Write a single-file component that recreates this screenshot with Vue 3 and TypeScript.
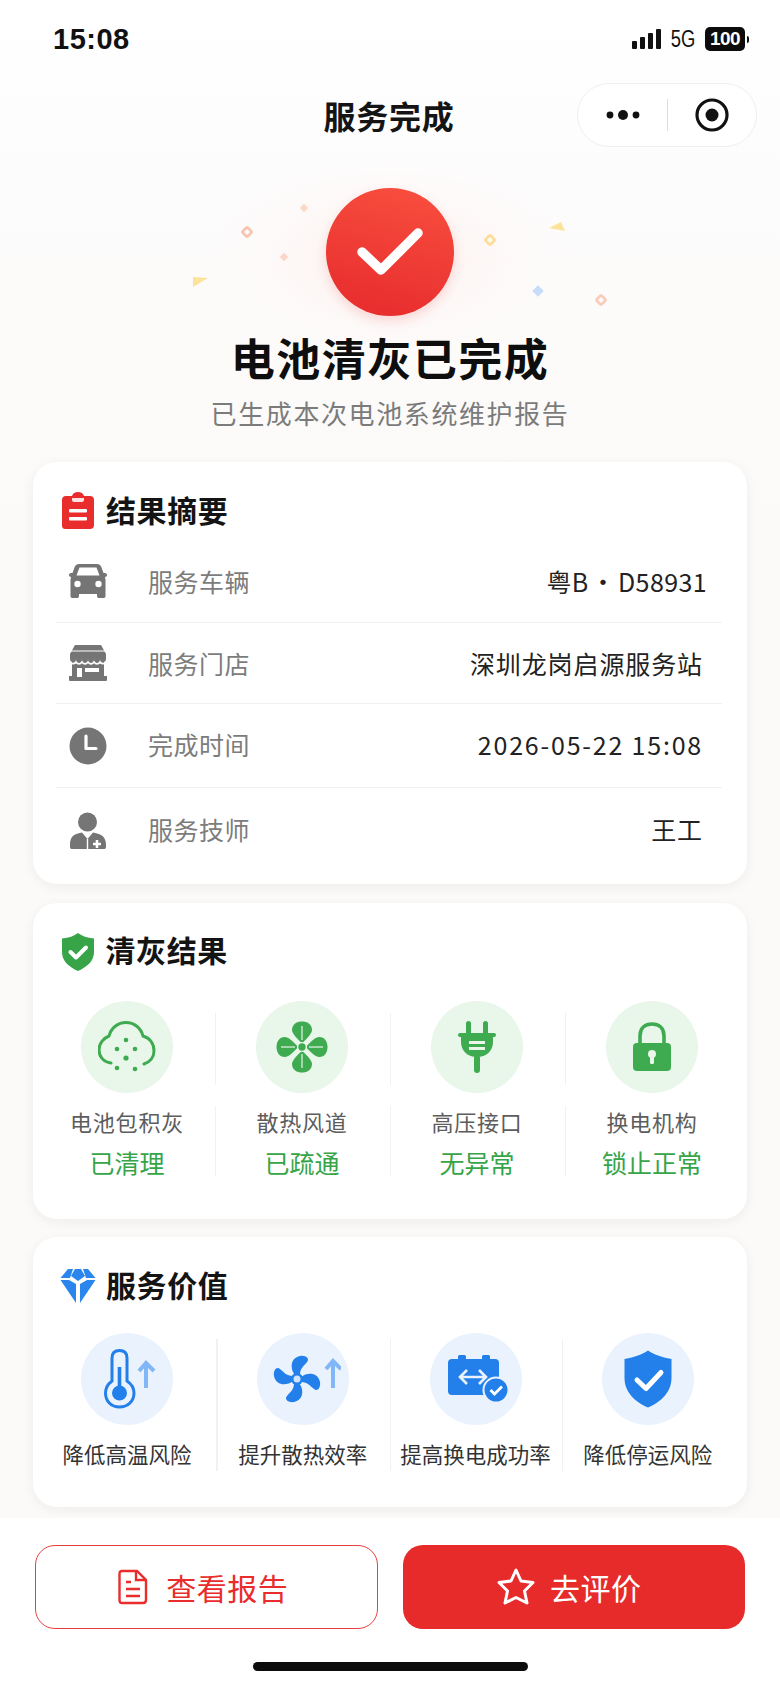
<script setup lang="ts">
const checks = [
  { label: '电池包积灰', state: '已清理' },
  { label: '散热风道', state: '已疏通' },
  { label: '高压接口', state: '无异常' },
  { label: '换电机构', state: '锁止正常' },
]
const values = ['降低高温风险', '提升散热效率', '提高换电成功率', '降低停运风险']
const rows = [
  { label: '服务车辆', value: '粤B · D58931', kind: 'plate' },
  { label: '服务门店', value: '深圳龙岗启源服务站', kind: '' },
  { label: '完成时间', value: '2026-05-22 15:08', kind: 'date' },
  { label: '服务技师', value: '王工', kind: '' },
]
</script>

<template>
  <div class="page">
    <header class="status">
      <span class="time">15:08</span>
      <div class="status-right">
        <svg width="30" height="22" viewBox="0 0 30 22"><g fill="#111"><rect x="0" y="13" width="5" height="8" rx="1"/><rect x="8" y="9" width="5" height="12" rx="1"/><rect x="16" y="5" width="5" height="16" rx="1"/><rect x="24" y="1" width="5" height="20" rx="1"/></g></svg>
        <span class="net">5G</span>
        <span class="batt">100</span>
        <span class="batt-tip"></span>
      </div>
    </header>

    <nav class="nav">
      <span></span>
      <h1 class="nav-title">服务完成</h1>
      <div class="capsule-wrap">
        <div class="capsule">
          <svg width="36" height="14" viewBox="0 0 36 14"><g fill="#111"><circle cx="5" cy="7" r="3.4"/><circle cx="18" cy="7" r="5"/><circle cx="31" cy="7" r="3.4"/></g></svg>
          <i class="capsule-sep"></i>
          <svg class="capsule-target" width="36" height="36" viewBox="0 0 36 36"><circle cx="18" cy="18" r="15" fill="none" stroke="#111" stroke-width="3.2"/><circle cx="18" cy="18" r="6.500" fill="#111"/></svg>
        </div>
      </div>
    </nav>

    <section class="hero">
      <div class="halo"></div>
      <svg class="confetti" width="440" height="160" viewBox="0 0 440 160">
        <rect x="-3.500" y="-3.500" width="7" height="7" rx="1" transform="translate(77 62) rotate(45)" fill="none" stroke="#fbc2ae" stroke-width="2.600"/>
        <rect x="-3" y="-3" width="6" height="6" transform="translate(134 38) rotate(45)" fill="#fbd8c6"/>
        <rect x="-3" y="-3" width="6" height="6" transform="translate(114 87) rotate(45)" fill="#fbd5c6"/>
        <path d="M23 107 L38 108 L23 117 Z" fill="#fbe39a"/>
        <rect x="-3.500" y="-3.500" width="7" height="7" rx="1" transform="translate(320 70) rotate(45)" fill="none" stroke="#fbdd98" stroke-width="2.600"/>
        <path d="M379 58 L391 52 L395 61 Z" fill="#fbe39a"/>
        <rect x="-4" y="-4" width="8" height="8" transform="translate(368 121) rotate(45)" fill="#c6dcfb"/>
        <rect x="-3.500" y="-3.500" width="7" height="7" rx="1" transform="translate(431 130) rotate(45)" fill="none" stroke="#fbcbbb" stroke-width="2.600"/>
      </svg>
      <div class="badge">
        <svg width="68" height="54" viewBox="0 0 68 54"><path d="M6 27 L25 45 L62 8" fill="none" stroke="#fff" stroke-width="9.500" stroke-linecap="round" stroke-linejoin="round"/></svg>
      </div>
      <h2 class="hero-title">电池清灰已完成</h2>
      <p class="hero-sub">已生成本次电池系统维护报告</p>
    </section>

    <main class="cards">
      <section class="card card-summary">
        <h3 class="card-title">
          <svg class="title-icon" width="34" height="38" viewBox="0 0 34 38">
            <path d="M5 4 H11 C12 1 14 0 17 0 C20 0 22 1 23 4 H29 C32 4 33 6 33 8 V33 C33 36 31 37 29 37 H5 C2 37 1 36 1 33 V8 C1 6 2 4 5 4 Z" fill="#e92c2c"/>
            <path d="M11 6 H23 V8 C23 9 22 10 21 10 H13 C12 10 11 9 11 8 Z" fill="#fbe3e3"/>
            <rect x="8" y="17" width="18" height="3.400" rx="1" fill="#fff"/><rect x="8" y="25" width="18" height="3.400" rx="1" fill="#fff"/>
          </svg>
          结果摘要
        </h3>
        <div class="rows">
          <div v-for="(row, i) in rows" :key="row.label" class="row">
            <span class="row-icon">
              <svg v-if="i === 0" width="38" height="36" viewBox="0 0 38 36"><path fill="#757575" d="M10 1 H28 C30 1 31.500 2 32.300 4 L34.500 10 H36 C37.200 10 38 11 38 12 C38 13 37 14 36 14 L36.500 17 V33 C36.500 34.500 35.500 35 34.500 35 H30 C29 35 28 34.500 28 33 V31 H10 V33 C10 34.500 9 35 8 35 H3.500 C2.500 35 1.500 34.500 1.500 33 V17 L2 14 C1 14 0 13 0 12 C0 11 0.800 10 2 10 H3.500 L5.700 4 C6.500 2 8 1 10 1 Z"/><path fill="#fff" d="M10.500 4.500 H27.500 L30.500 12.500 H7.500 Z"/><circle cx="8.500" cy="21" r="3.200" fill="#fff"/><circle cx="29.500" cy="21" r="3.200" fill="#fff"/></svg>
              <svg v-else-if="i === 1" width="38" height="36" viewBox="0 0 38 36"><path fill="#757575" d="M6 0 H32 L37 9 V13 H1 V9 Z"/><path fill="#757575" d="M3 15 H35 V31 H38 V35 C38 35.500 37.500 36 37 36 H1 C0.500 36 0 35.500 0 35 V31 H3 Z"/><path fill="#757575" d="M1 10 H37 V14 A3 3 0 0 1 31 14 A3 3 0 0 1 25 14 A3 3 0 0 1 19 14 A3 3 0 0 1 13 14 A3 3 0 0 1 7 14 A3 3 0 0 1 1 14 Z"/><path d="M1 6 H37" stroke="#fff" stroke-width="1.200"/><path d="M1 18 C4 19 6 19 7 17 C9 19.500 11 19.500 13 17 C15 19.500 17 19.500 19 17 C21 19.500 23 19.500 25 17 C27 19.500 29 19.500 31 17 C32 19 34 19 37 18" stroke="#fff" stroke-width="1.800" fill="none"/><rect x="8" y="23" width="5" height="9" fill="#fff"/><rect x="16" y="23" width="14" height="4" fill="#fff"/></svg>
              <svg v-else-if="i === 2" width="38" height="38" viewBox="0 0 38 38"><circle cx="19" cy="19" r="18.500" fill="#757575"/><path d="M17 9 V21.500 H27" fill="none" stroke="#fff" stroke-width="3.200" stroke-linecap="round" stroke-linejoin="round"/></svg>
              <svg v-else width="38" height="38" viewBox="0 0 38 38"><circle cx="18.500" cy="10" r="9.500" fill="#757575"/><path fill="#757575" d="M1 33 C1 25 4 22 13 20.500 L18.500 27 L24 20.500 C33 22 37 25 37 33 V35 C37 36.500 36 37 35 37 H3 C2 37 1 36.500 1 35 Z"/><path d="M24 32 H32 M28 28 V36" stroke="#fff" stroke-width="2.600"/><path d="M18.500 27 V37" stroke="#fff" stroke-width="1.400"/></svg>
            </span>
            <span class="row-label">{{ row.label }}</span>
            <span class="row-value" :class="row.kind">{{ row.value }}</span>
          </div>
        </div>
      </section>

      <section class="card card-clean">
        <h3 class="card-title">
          <svg class="title-icon shield" width="34" height="38" viewBox="0 0 34 38"><path d="M17 0 C21 3 26 5 33 5.500 V19 C33 28 26 34 17 38 C8 34 1 28 1 19 V5.500 C8 5 13 3 17 0 Z" fill="#36a447"/><path d="M9.500 19 L15 24.500 L25 14.500" fill="none" stroke="#fff" stroke-width="4" stroke-linecap="round" stroke-linejoin="round"/></svg>
          清灰结果
        </h3>
        <div class="grid grid-clean">
          <div v-for="(c, i) in checks" :key="c.label" class="cell">
            <div class="circle green">
              <svg v-if="i === 0" width="58" height="52" viewBox="0 0 58 52"><path d="M13 42 C5 41 1 35 1 29 C1 22 6 17 11 15 C13 7 20 1.500 28 1.500 C36 1.500 43 7 45 15 C52 17 56 23 56 30 C56 36 52 41 46 43" fill="none" stroke="#3fab50" stroke-width="3" stroke-linecap="round"/><g fill="#3fab50"><circle cx="28" cy="19" r="2.300"/><circle cx="19" cy="28" r="2.300"/><circle cx="37" cy="28" r="2.300"/><circle cx="28" cy="37" r="2.600"/><circle cx="19" cy="47" r="2.300"/><circle cx="37" cy="48" r="2.300"/></g></svg>
              <svg v-else-if="i === 1" width="52" height="52" viewBox="0 0 52 52"><g fill="#3fab50"><path d="M26 22 C20 17 16 12 16 9 C16 3 21 0.500 26 0.500 C31 0.500 36 3 36 9 C36 12 32 17 26 22 Z"/><path d="M26 22 C20 17 16 12 16 9 C16 3 21 0.500 26 0.500 C31 0.500 36 3 36 9 C36 12 32 17 26 22 Z" transform="rotate(90 26 26)"/><path d="M26 22 C20 17 16 12 16 9 C16 3 21 0.500 26 0.500 C31 0.500 36 3 36 9 C36 12 32 17 26 22 Z" transform="rotate(180 26 26)"/><path d="M26 22 C20 17 16 12 16 9 C16 3 21 0.500 26 0.500 C31 0.500 36 3 36 9 C36 12 32 17 26 22 Z" transform="rotate(270 26 26)"/></g><g stroke="#e9f6ea" stroke-width="1.200" fill="none"><path d="M26 5 V19"/><path d="M26 33 V47"/><path d="M5 26 H19"/><path d="M33 26 H47"/></g><circle cx="26" cy="26" r="4.400" fill="#3fab50" stroke="#e9f6ea" stroke-width="1.400"/></svg>
              <svg v-else-if="i === 2" width="38" height="52" viewBox="0 0 38 52"><g fill="#3fab50"><rect x="8" y="0" width="5" height="14" rx="2.500"/><rect x="25" y="0" width="5" height="14" rx="2.500"/><rect x="0" y="12" width="38" height="4" rx="2"/><path d="M3 15 H35 V21 C35 30 28 36 19 36 C10 36 3 30 3 21 Z"/><rect x="16" y="34" width="6" height="18" rx="3"/></g><rect x="11" y="20" width="16" height="3" fill="#e9f6ea"/><rect x="11" y="26" width="16" height="3" fill="#e9f6ea"/></svg>
              <svg v-else width="40" height="50" viewBox="0 0 40 50"><path d="M8 22 V14 C8 6 13 2 20 2 C27 2 32 6 32 14 V22" fill="none" stroke="#3fab50" stroke-width="3.600"/><rect x="1" y="21" width="38" height="28" rx="4" fill="#3fab50"/><circle cx="20" cy="32" r="4" fill="#e9f6ea"/><rect x="18" y="33" width="4" height="9" rx="1.500" fill="#e9f6ea"/></svg>
            </div>
            <p class="cell-label">{{ c.label }}</p>
            <p class="cell-state">{{ c.state }}</p>
          </div>
        </div>
      </section>

      <section class="card card-value">
        <h3 class="card-title">
          <svg class="title-icon diamond" width="36" height="36" viewBox="0 0 36 36"><g fill="#2a85ec"><path d="M8 1 H13 L10 10 H0.500 Z"/><path d="M15 1 H21 L25 8 L18 13 L11 8 Z"/><path d="M23 1 H28 L35.500 10 H26 Z"/><path d="M0.500 12 H9 L16 16 V35 Z"/><path d="M27 12 H35.500 L20 35 V16 Z"/></g></svg>
          服务价值
        </h3>
        <div class="grid grid-value">
          <div v-for="(v, i) in values" :key="v" class="cell">
            <div class="circle blue">
              <svg v-if="i === 0" class="shift" width="54" height="60" viewBox="0 0 54 60"><path d="M8 32 V9 C8 4 11 1.500 15.500 1.500 C20 1.500 23 4 23 9 V32 C27.500 35 30 39 30 44 C30 52 24 58 15.500 58 C7 58 1.500 52 1.500 44 C1.500 39 4 35 8 32 Z" fill="none" stroke="#237fea" stroke-width="3"/><path d="M15.500 18 V44" stroke="#237fea" stroke-width="3.600"/><circle cx="15.500" cy="44" r="7.500" fill="#237fea"/><path d="M42 14 V39 M35 22 L42 14 L50 22" fill="none" stroke="#82b7f7" stroke-width="4"/></svg>
              <svg v-else-if="i === 1" class="shift" width="68" height="48" viewBox="0 0 68 48"><g fill="#237fea"><path d="M22 20 C17 14 17 3 27 1 C33 0 37 4 34 7 C31 11 27 13 27 20 Z"/><path d="M22 20 C17 14 17 3 27 1 C33 0 37 4 34 7 C31 11 27 13 27 20 Z" transform="rotate(90 24 24)"/><path d="M22 20 C17 14 17 3 27 1 C33 0 37 4 34 7 C31 11 27 13 27 20 Z" transform="rotate(180 24 24)"/><path d="M22 20 C17 14 17 3 27 1 C33 0 37 4 34 7 C31 11 27 13 27 20 Z" transform="rotate(270 24 24)"/><circle cx="24" cy="24" r="6"/></g><circle cx="24" cy="24" r="3.500" fill="#cfe3fb"/><path d="M60 6 V33 M53 14 L60 6 L68 14" fill="none" stroke="#82b7f7" stroke-width="4"/></svg>
              <svg v-else-if="i === 2" class="shift-s" width="62" height="48" viewBox="0 0 62 48"><rect x="11" y="0" width="8" height="6" rx="1.500" fill="#237fea"/><rect x="35" y="0" width="8" height="6" rx="1.500" fill="#237fea"/><rect x="1" y="4" width="51" height="36" rx="4" fill="#237fea"/><path d="M13 22 H39 M20 15 L13 22 L20 29 M32 15 L39 22 L32 29" fill="none" stroke="#eaf3fd" stroke-width="2.600"/><circle cx="49" cy="35" r="12.500" fill="#237fea" stroke="#eaf3fd" stroke-width="2"/><path d="M43.500 35 L47.500 39 L55 31.500" fill="none" stroke="#fff" stroke-width="2.800"/></svg>
              <svg v-else width="48" height="58" viewBox="0 0 48 58"><path d="M24 0.500 C30 4.500 37 7 47.500 9 V28 C47.500 42 37 52 24 57.500 C11 52 0.500 42 0.500 28 V9 C11 7 18 4.500 24 0.500 Z" fill="#237fea"/><path d="M13 30 L22 38.500 L37 22.500" fill="none" stroke="#fff" stroke-width="5" stroke-linecap="round" stroke-linejoin="round"/></svg>
            </div>
            <p class="cell-value">{{ v }}</p>
          </div>
        </div>
      </section>
    </main>

    <footer class="footer">
      <div class="actions">
        <button class="btn btn-line">
          <svg width="30" height="36" viewBox="0 0 30 36"><path d="M4 2 H19 L28 11 V31 C28 33 27 34 25 34 H4 C2.500 34 1.500 33 1.500 31 V5 C1.500 3 2.500 2 4 2 Z" fill="none" stroke="#e92c2c" stroke-width="2.400"/><path d="M18 2 V11 H28 M8 13 H13 M8 20 H22 M8 27 H22" fill="none" stroke="#e92c2c" stroke-width="2.400"/></svg>
          查看报告
        </button>
        <button class="btn btn-fill">
          <svg width="40" height="40" viewBox="0 0 40 40"><path d="M20 3 L25 14 L37 15.500 L28.500 24 L31 36 L20 30.500 L9 36 L11.500 24 L3 15.500 L15 14 Z" fill="none" stroke="#fff" stroke-width="3" stroke-linejoin="round"/></svg>
          去评价
        </button>
      </div>
      <div class="home-bar"></div>
    </footer>
  </div>
</template>

<style>
html, body { margin: 0; background: #fff; }
</style>

<style scoped>
.page {
  width: 780px;
  height: 1687px;
  overflow: hidden;
  display: flex;
  flex-direction: column;
  background: linear-gradient(180deg, #ffffff 0, #fdfcfc 200px, #fbfaf8 520px, #fbfaf8 100%);
  font-family: "Noto Sans CJK SC", "Noto Sans", sans-serif;
  color: #141414;
}
h1, h2, h3, p { margin: 0; }

.status {
  height: 76px;
  flex: none;
  box-sizing: border-box;
  padding: 20px 31px 0 53px;
  display: flex;
  justify-content: space-between;
  align-items: flex-start;
}
.time {
  font-family: "Liberation Sans", sans-serif;
  font-weight: 700;
  font-size: 29px;
  line-height: 38px;
  letter-spacing: 0.5px;
  color: #111;
}
.status-right { display: flex; align-items: center; height: 38px; }
.net {
  margin-left: 8px;
  width: 26px;
  display: flex;
  justify-content: center;
  white-space: nowrap;
  font-family: "Liberation Sans", sans-serif;
  font-size: 23px;
  color: #111;
  transform: scaleX(0.8);
}
.batt {
  margin-left: 9px;
  width: 40px;
  height: 24px;
  border-radius: 5px;
  background: #0c0c0c;
  color: #fff;
  font-family: "Liberation Sans", sans-serif;
  font-weight: 700;
  font-size: 19px;
  line-height: 24px;
  letter-spacing: -0.5px;
  text-align: center;
}
.batt-tip { width: 2px; height: 7px; margin-left: 2px; background: #111; border-radius: 0 2px 2px 0; }

.nav {
  height: 74px;
  flex: none;
  display: grid;
  grid-template-columns: 1fr auto 1fr;
  align-items: center;
}
.nav-title { font-size: 32px; font-weight: 700; line-height: 44px; margin-top: 4px; margin-left: -2px; letter-spacing: 0.8px; }
.capsule-wrap { display: flex; justify-content: flex-end; padding-right: 23px; margin-top: 3px; }
.capsule {
  box-sizing: border-box;
  width: 180px;
  height: 64px;
  border: 1px solid #efefef;
  border-radius: 32px;
  background: #fff;
  display: flex;
  align-items: center;
  padding-left: 27px;
}
.capsule-sep { width: 1px; height: 32px; background: #dcdcdc; margin-left: 26px; }
.capsule-target { margin-left: 26px; }

.hero {
  position: relative;
  flex: none;
  height: 312px;
  box-sizing: border-box;
  padding-top: 38px;
  display: flex;
  flex-direction: column;
  align-items: center;
}
.halo {
  position: absolute;
  left: 210px;
  top: 10px;
  width: 360px;
  height: 200px;
  border-radius: 50%;
  background: radial-gradient(closest-side, #fbf2ef 0, #fdf9f8 65%, rgba(255,255,255,0) 100%);
}
.confetti { position: absolute; left: 170px; top: 20px; }
.badge {
  position: relative;
  width: 128px;
  height: 128px;
  border-radius: 50%;
  background: linear-gradient(195deg, #f9503f 0, #e62a2c 100%);
  box-shadow: 0 5px 12px rgba(233, 44, 44, 0.16);
  display: flex;
  align-items: center;
  justify-content: center;
}
.hero-title {
  position: relative;
  margin-top: 11px;
  font-size: 44px;
  font-weight: 700;
  line-height: 60px;
  letter-spacing: 1.500px;
  color: #0e0e0e;
}
.hero-sub {
  position: relative;
  margin-top: 8px;
  font-size: 26px;
  line-height: 36px;
  letter-spacing: 1.600px;
  color: #7b7b7b;
}

.cards { flex: 1; padding: 0 33px; display: flex; flex-direction: column; }
.card {
  flex: none;
  box-sizing: border-box;
  background: #fff;
  border-radius: 24px;
  box-shadow: 0 3px 12px rgba(60, 40, 30, 0.06);
  overflow: hidden;
}
.card-summary { height: 422px; padding: 26px 28px 0; }
.card-clean { height: 316px; margin-top: 19px; padding: 25px 5.500px 0; }
.card-value { height: 270px; margin-top: 18px; padding: 26px 4px 0; }
.card-title {
  display: flex;
  align-items: center;
  height: 42px;
  font-size: 30px;
  font-weight: 700;
  line-height: 42px;
  color: #141414;
  letter-spacing: 0.6px;
}
.title-icon { flex: none; margin-right: 11px; margin-top: 4px; }
.title-icon.shield { margin-top: 6px; margin-left: -1px; }
.title-icon.diamond { margin-right: 10px; margin-left: -1px; }
.card-clean .card-title { padding-left: 23px; }
.card-value .card-title { padding-left: 24px; }

.rows { margin: 10px -3px 0 -5px; }
.row {
  display: flex;
  align-items: center;
  height: 81px;
  border-top: 1.500px solid #f2f1f0;
  box-sizing: border-box;
  font-size: 25px;
}
.row:nth-child(1) { border-top: none; height: 82px; }
.row:nth-child(3) { height: 84px; }
.row:nth-child(4) { height: 86px; }
.row:nth-child(n+3) .row-label,
.row:nth-child(n+3) .row-value { margin-bottom: 4px; }
.row-icon { padding-left: 13px; flex: none; display: flex; width: 79px; }
.row-label { color: #7c7c7c; letter-spacing: 0.5px; }
.row-value { margin-left: auto; padding-right: 19px; color: #222; letter-spacing: 0.9px; }
.row-value.date { letter-spacing: 1.800px; }
.row-value.plate { letter-spacing: 0.4px; padding-right: 15px; word-spacing: -4px; }

.grid { display: grid; }
.grid-clean { margin-top: 31px; grid-template-columns: repeat(4, 175px); margin-left: 1px; }
.grid-value { margin-top: 28px; grid-template-columns: 178px 173.500px 172px 172.500px; margin-left: 1px; }
.cell {
  position: relative;
  display: flex;
  flex-direction: column;
  align-items: center;
}
.grid-clean .cell + .cell::before,
.grid-value .cell + .cell::before {
  content: "";
  position: absolute;
  left: 0;
  width: 1.500px;
  background: #f1f1f1;
}
.grid-clean .cell + .cell::before { top: 12px; height: 72px; }
.grid-clean .cell + .cell::after {
  content: "";
  position: absolute;
  left: 0;
  top: 105px;
  height: 70px;
  width: 1.500px;
  background: #f1f1f1;
}
.grid-value .cell + .cell::before { top: 6px; height: 132px; }
.circle {
  width: 92px;
  height: 92px;
  border-radius: 50%;
  display: flex;
  align-items: center;
  justify-content: center;
}
.green { background: #e9f6ea; }
.blue { background: #eaf3fd; }
.shift { margin-left: 8px; }
.shift-s { margin-left: 4px; }
.cell-label {
  margin-top: 12px;
  font-size: 22px;
  line-height: 32px;
  color: #5d5d5d;
  letter-spacing: 0.800px;
}
.cell-state {
  margin-top: 8px;
  font-size: 25px;
  line-height: 34px;
  color: #36a447;
}
.cell-value {
  margin-top: 13px;
  font-size: 21.500px;
  line-height: 32px;
  color: #333;
  white-space: nowrap;
}

.footer { flex: none; height: 169px; background: #fff; position: relative; }
.actions { display: grid; grid-template-columns: 1fr 1fr; gap: 25px; padding: 27px 35px 0; }
.btn {
  padding: 0;
  height: 84px;
  border-radius: 20px;
  font-family: inherit;
  font-size: 30px;
  letter-spacing: 0.500px;
  display: flex;
  align-items: center;
  justify-content: center;
  box-sizing: border-box;
}
.btn-line { background: #fff; color: #e92c2c; border: 1.500px solid #e8403f; gap: 18px; padding-right: 6px; }
.btn-fill { background: #e72b2b; color: #fff; border: none; gap: 14px; padding-right: 10px; }
.home-bar {
  position: absolute;
  left: 253px;
  top: 144px;
  width: 275px;
  height: 9px;
  border-radius: 5px;
  background: #0c0c0c;
}
</style>
